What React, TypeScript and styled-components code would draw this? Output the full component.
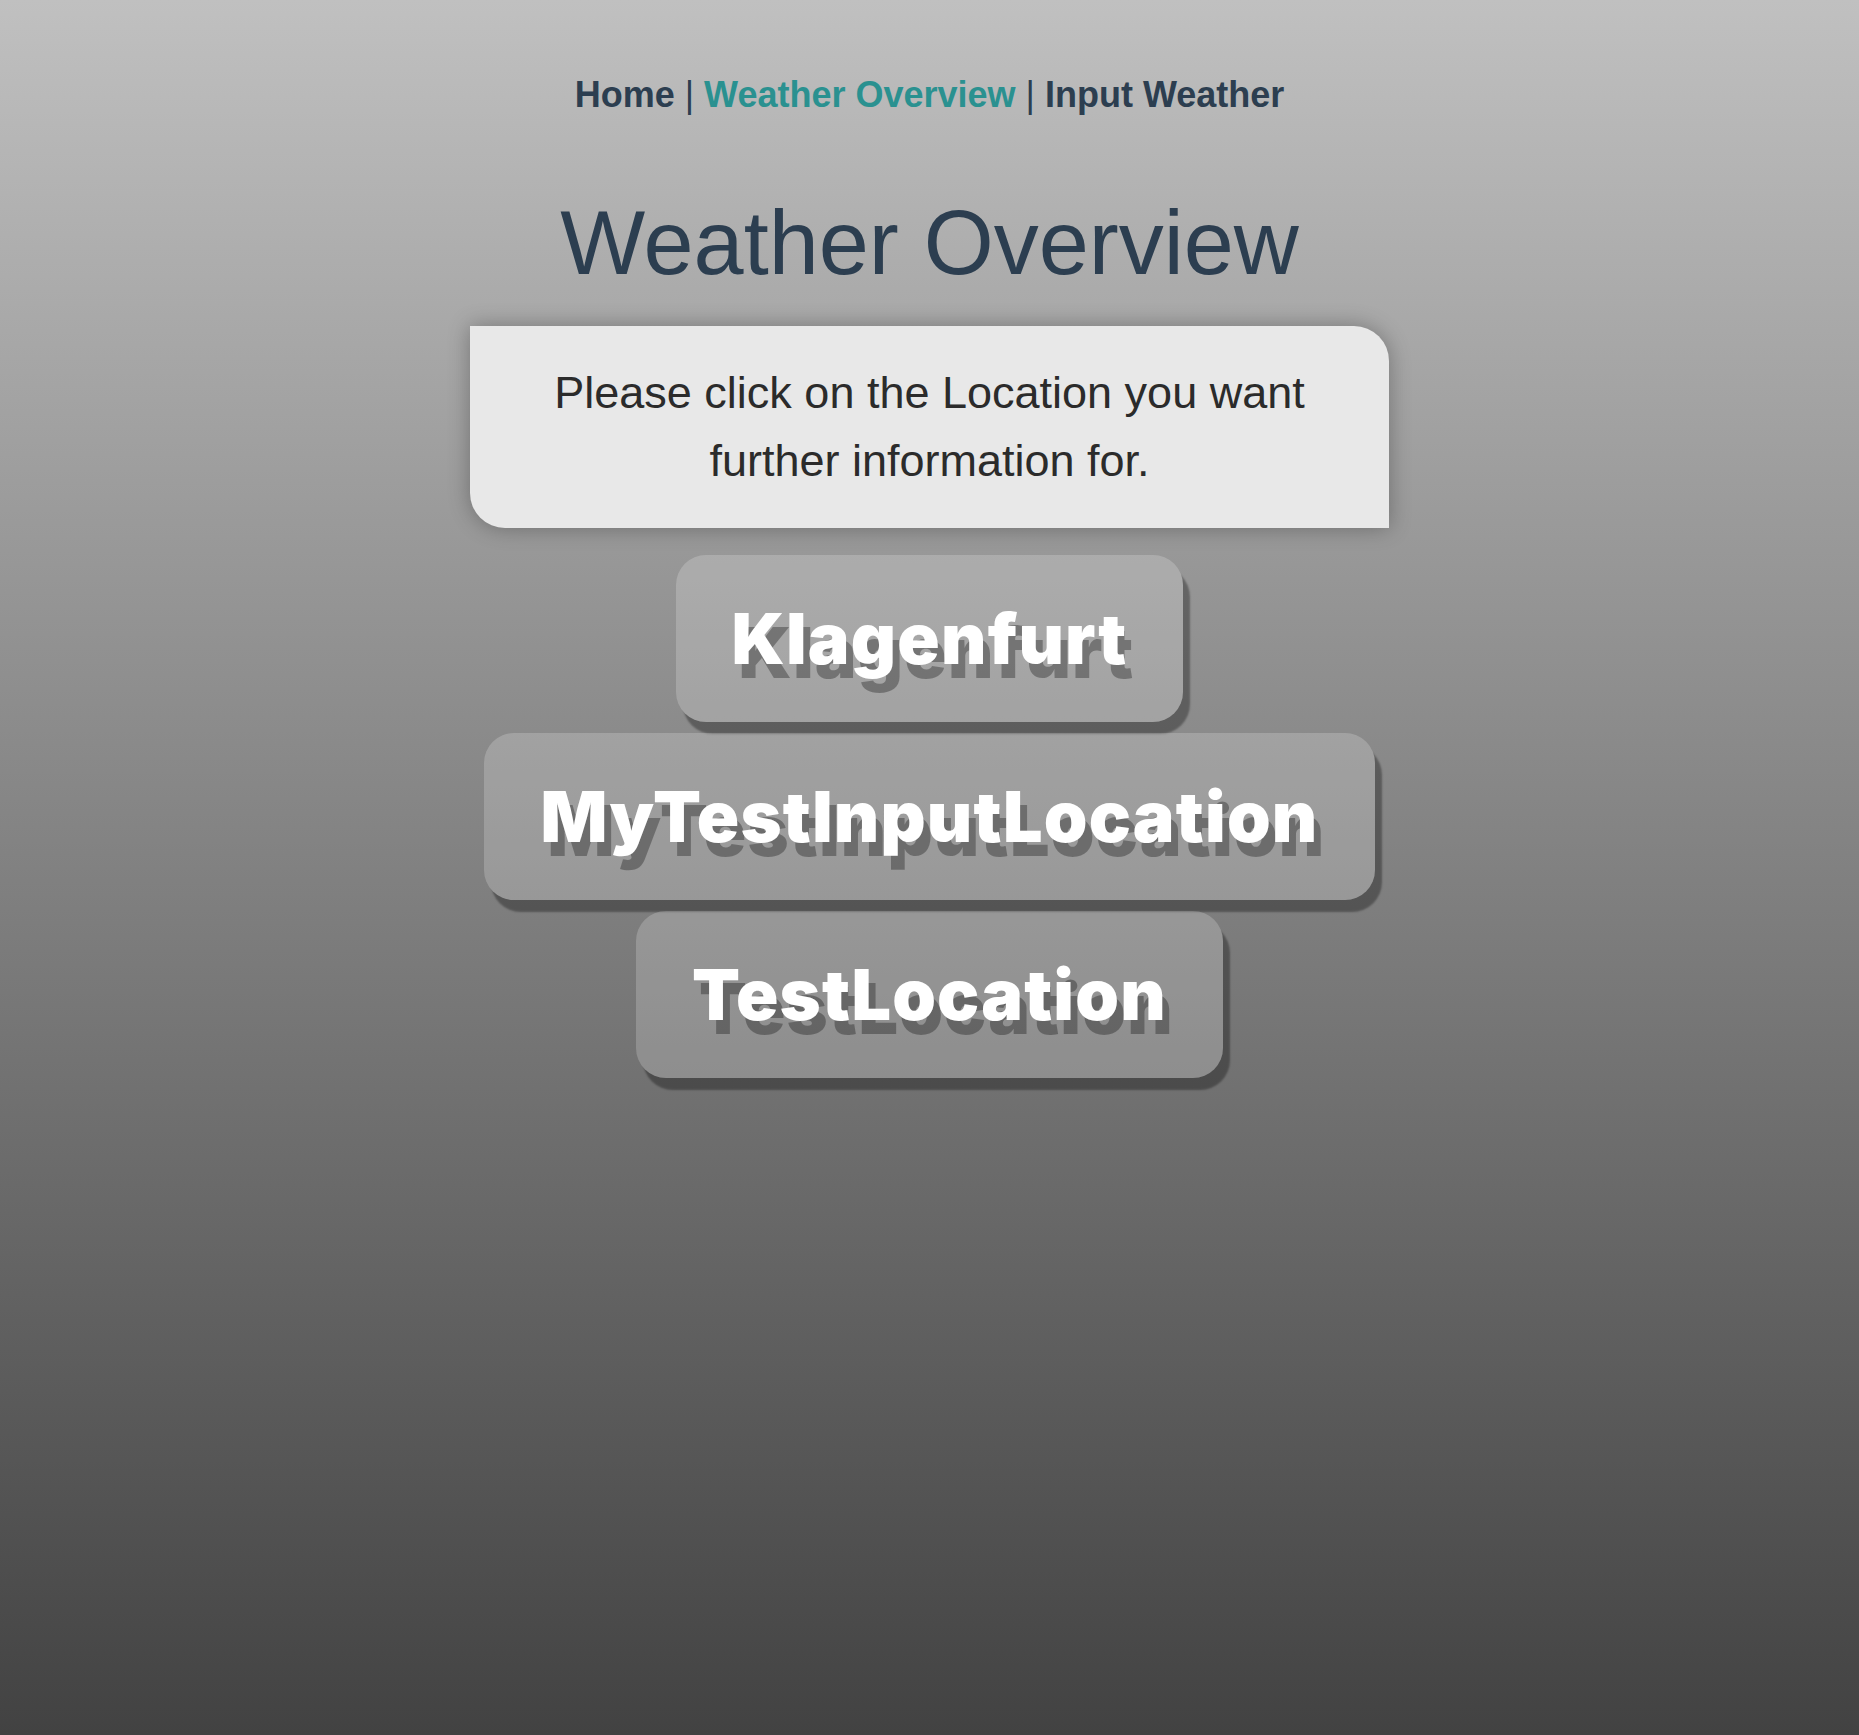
import { FunctionComponent } from 'react'

import styled, { createGlobalStyle } from 'styled-components'

const locations = ['Klagenfurt', 'MyTestInputLocation', 'TestLocation']

const GlobalStyle = createGlobalStyle`
    html,
    body {
        margin: 0;
        min-height: 100%;
    }

    body {
        min-height: 100vh;
        background: linear-gradient(#c0c0c0, #424242);
        font-family: 'Liberation Sans', Arial, sans-serif;
    }
`

const Page = styled.div`
    display: flex;
    flex-direction: column;
    align-items: center;
    text-align: center;
    color: #2c3e50;
`

const Nav = styled.nav`
    padding-top: 74px;
    font-size: 36px;
    line-height: normal;
`

const NavLink = styled.a<{ $active?: boolean }>`
    color: ${({ $active }): string => ($active ? '#2a9190' : '#2c3e50')};
    font-weight: 700;
    text-decoration: none;
    cursor: pointer;
`

const Title = styled.h1`
    margin: 76px 0 0;
    font-size: 90px;
    font-weight: 400;
    line-height: normal;
`

const InfoBox = styled.div`
    box-sizing: border-box;
    width: 919px;
    margin-top: 31px;
    padding: 33px 40px 34px;
    border-radius: 0 35px 0 35px;
    background: #e8e8e8;
    box-shadow: 0 0 22px rgba(0, 0, 0, 0.3);
    color: #2b2b2b;
    font-size: 45px;
    line-height: 1.5;
`

const Locations = styled.div`
    display: flex;
    flex-direction: column;
    align-items: center;
    gap: 11px;
    margin-top: 27px;
`

// no Arial Black here, so Inter Black stands in with a little tracking
const LocationButton = styled.button`
    box-sizing: border-box;
    height: 167px;
    padding: 0 56px;
    border: none;
    border-radius: 30px;
    background: rgba(255, 255, 255, 0.2);
    box-shadow: 7px 12px 2px rgba(0, 0, 0, 0.33);
    color: #fff;
    font-family: 'Arial Black', Inter, 'Liberation Sans', sans-serif;
    font-size: 70px;
    font-weight: 900;
    letter-spacing: 1.2px;
    line-height: 1.4;
    text-shadow: 0.1em 0.2em rgba(0, 0, 0, 0.3);
    cursor: pointer;
`

const App: FunctionComponent = () => (
    <>
        <GlobalStyle />
        <Page>
            <Nav>
                <NavLink>Home</NavLink> | <NavLink $active>Weather Overview</NavLink> | <NavLink>Input Weather</NavLink>
            </Nav>
            <Title>Weather Overview</Title>
            <InfoBox>Please click on the Location you want further information for.</InfoBox>
            <Locations>
                {locations.map((location) => (
                    <LocationButton key={location}>{location}</LocationButton>
                ))}
            </Locations>
        </Page>
    </>
)

export default App
